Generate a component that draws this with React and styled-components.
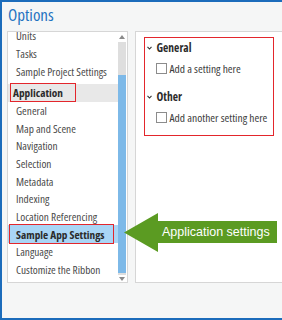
import React from "react";
import styled, { createGlobalStyle } from "styled-components";

const GlobalStyle = createGlobalStyle`
  html, body {
    margin: 0;
    padding: 0;
    background: #f5f6f6;
  }
  * {
    box-sizing: border-box;
  }
`;

const Window = styled.div`
  position: relative;
  width: 282px;
  height: 320px;
  overflow: hidden;
  background: #f5f6f6;
  border-top: 2px solid #1c6cbb;
  border-left: 2px solid #1c6cbb;
  border-bottom: 2px solid #1c6cbb;
  font-family: "Noto Sans Condensed", "Open Sans", sans-serif;
  font-stretch: 80%;
`;

const Title = styled.h1`
  margin: 0;
  padding: 2px 0 0 6px;
  height: 29px;
  font-size: 17px;
  line-height: 22px;
  font-weight: normal;
  color: #1f73c1;
`;

const Body = styled.div`
  display: flex;
  padding-left: 5px;
  height: 252px;
`;

const LeftPanel = styled.div`
  display: flex;
  flex: none;
  width: 121px;
  height: 252px;
  border: 1px solid #d6d6d6;
  background: #fff;
  overflow: hidden;
`;

const List = styled.div`
  flex: 1;
  margin-top: -5px;
`;

const Row = styled.div`
  position: relative;
  display: flex;
  align-items: center;
  height: 17.67px;
  margin-top: ${(p) => (p.$header ? "4px" : "0")};
  padding-left: ${(p) => (p.$header ? "5px" : "8px")};
  font-size: 11.3px;
  font-weight: ${(p) => (p.$header || p.$selected ? "bold" : "normal")};
  color: ${(p) => (p.$header || p.$selected ? "#2b2b2b" : "#4a4a4a")};
  background: ${(p) =>
    p.$selected ? "#a9d5f5" : p.$header ? "#e8e8e8" : "transparent"};
  white-space: nowrap;
`;

const Marker = styled.span`
  position: absolute;
  border: 1.5px solid #e3262c;
  pointer-events: none;
`;

const Scrollbar = styled.div`
  display: flex;
  flex-direction: column;
  flex: none;
  width: 8px;
  margin-right: 1px;
`;

const ArrowCell = styled.div`
  display: flex;
  align-items: center;
  justify-content: center;
  height: ${(p) => p.$h}px;
`;

const Track = styled.div`
  height: ${(p) => p.$h}px;
  background: ${(p) => (p.$thumb ? "#7db9e8" : "#dedede")};
`;

const RightPanel = styled.div`
  flex: none;
  width: 160px;
  height: 252px;
  margin-left: 7px;
  padding: 5px 0 0 8px;
  border: 1px solid #d6d6d6;
  border-right: none;
  background: #fff;
`;

const Group = styled.div`
  width: 130px;
  height: 99px;
  padding-top: 0.5px;
  border: 1.5px solid #e3262c;
  font-size: 11.5px;
  color: #333;
  white-space: nowrap;
`;

const SectionHeader = styled.div`
  display: flex;
  align-items: center;
  height: 18px;
  margin-top: ${(p) => p.$gap}px;
  padding-left: 1.5px;
  font-weight: bold;
  color: #2b2b2b;

  svg {
    margin-right: 5px;
  }
`;

const CheckRow = styled.label`
  display: flex;
  align-items: center;
  height: 18px;
  margin-top: ${(p) => p.$gap}px;
  padding-left: 10.5px;
  color: #3c3c3c;
`;

const Box = styled.span`
  flex: none;
  width: 11px;
  height: 11px;
  margin-right: 3px;
  border: 1px solid #8c8c8c;
  background: #fff;
`;

const Callout = styled.div`
  position: absolute;
  left: 122px;
  top: 211px;
  width: 153px;
  height: 39px;
`;

const CalloutText = styled.span`
  position: absolute;
  left: 38px;
  top: 8px;
  height: 22px;
  line-height: 22px;
  font-family: "Liberation Sans", Arial, sans-serif;
  font-stretch: normal;
  font-size: 12.5px;
  color: #fff;
  white-space: nowrap;
`;

const Chevron = () => (
  <svg width="5" height="4" viewBox="0 0 5 4">
    <polyline points="0.5,0.8 2.5,3 4.5,0.8" fill="none" stroke="#333" strokeWidth="1.1" />
  </svg>
);

const Tri = ({ up }) => (
  <svg width="6" height="4" viewBox="0 0 6 4">
    <polygon points={up ? "3,0 6,4 0,4" : "0,0 6,0 3,4"} fill="#8a8a8a" />
  </svg>
);

const items = [
  { label: "Units" },
  { label: "Tasks" },
  { label: "Sample Project Settings" },
  { label: "Application", header: true, marker: { left: 2, top: -1, width: 66, height: 19 } },
  { label: "General" },
  { label: "Map and Scene" },
  { label: "Navigation" },
  { label: "Selection" },
  { label: "Metadata" },
  { label: "Indexing" },
  { label: "Location Referencing" },
  { label: "Sample App Settings", selected: true, marker: { left: 1, top: -1.5, width: 105, height: 20 } },
  { label: "Language" },
  { label: "Customize the Ribbon" },
];

export default function App() {
  return (
    <>
      <GlobalStyle />
      <Window>
        <Title>Options</Title>
        <Body>
          <LeftPanel>
            <List>
              {items.map((it) => (
                <Row key={it.label} $header={it.header} $selected={it.selected}>
                  {it.label}
                  {it.marker && <Marker style={it.marker} />}
                </Row>
              ))}
            </List>
            <Scrollbar>
              <ArrowCell $h={10}>
                <Tri up />
              </ArrowCell>
              <Track $h={33} />
              <Track $h={198} $thumb />
              <Track $h={2} />
              <ArrowCell $h={7}>
                <Tri />
              </ArrowCell>
            </Scrollbar>
          </LeftPanel>
          <RightPanel>
            <Group>
              <SectionHeader $gap={0}>
                <Chevron />
                General
              </SectionHeader>
              <CheckRow $gap={3}>
                <Box />
                Add a setting here
              </CheckRow>
              <SectionHeader $gap={10}>
                <Chevron />
                Other
              </SectionHeader>
              <CheckRow $gap={2.5}>
                <Box />
                Add another setting here
              </CheckRow>
            </Group>
          </RightPanel>
        </Body>
        <Callout>
          <svg width="153" height="39" viewBox="0 0 153 39">
            <polygon points="0,19.5 34,0 34,8 153,8 153,30 34,30 34,39" fill="#5b9b22" />
          </svg>
          <CalloutText>Application settings</CalloutText>
        </Callout>
      </Window>
    </>
  );
}
